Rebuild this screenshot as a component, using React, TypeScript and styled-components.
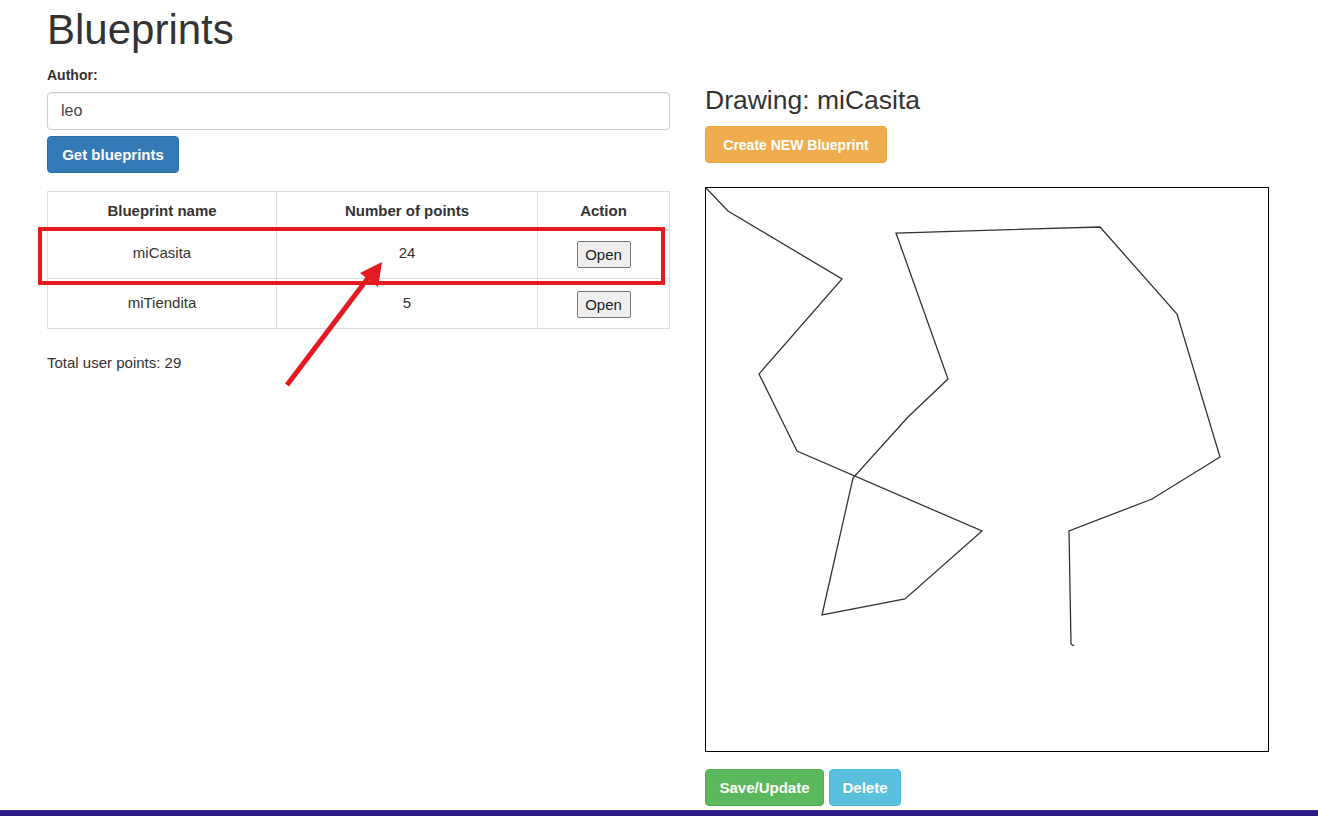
import React from "react";
import styled, { createGlobalStyle } from "styled-components";

const Global = createGlobalStyle`
  html, body { margin: 0; padding: 0; background: #fff; }
  body { font-family: "Liberation Sans", Arial, sans-serif; color: #333; font-size: 15px; }
  * { box-sizing: border-box; }
`;

const Page = styled.div`
  position: relative;
  min-height: 816px;
  display: flex;
  flex-direction: column;
`;

const Columns = styled.div`
  display: grid;
  grid-template-columns: 623px 564px;
  column-gap: 35px;
  padding: 0 0 0 47px;
`;

const LeftCol = styled.div`
  display: flex;
  flex-direction: column;
`;

const RightCol = styled.div`
  display: flex;
  flex-direction: column;
  padding-top: 84px;
`;

const Title = styled.h1`
  margin: 6px 0 0;
  font-size: 42px;
  font-weight: 400;
  line-height: 48px;
  color: #333;
`;

const Label = styled.label`
  margin-top: 11px;
  font-weight: 700;
  font-size: 14px;
  line-height: 20px;
`;

const Input = styled.input`
  margin-top: 7px;
  height: 38px;
  width: 100%;
  border: 1px solid #ccc;
  border-radius: 4px;
  padding: 6px 13px;
  font-family: inherit;
  font-size: 16px;
  color: #444;
  box-shadow: inset 0 1px 1px rgba(0,0,0,0.075);
`;

const Btn = styled.button<{ $bg: string; $border: string; $w: number }>`
  width: ${p => p.$w}px;
  height: 37px;
  padding: 0 6px;
  white-space: nowrap;
  border-radius: 4px;
  border: 1px solid ${p => p.$border};
  background: ${p => p.$bg};
  color: #fff;
  font-family: inherit;
  font-weight: 700;
  font-size: 15px;
  cursor: pointer;
`;

const GetBtn = styled(Btn)`
  margin-top: 6px;
  align-self: flex-start;
`;

const Table = styled.table`
  margin-top: 18px;
  width: 100%;
  border-collapse: collapse;
  border: 1px solid #ddd;
`;

const Th = styled.th<{ $w?: number }>`
  border: 1px solid #ddd;
  border-bottom-width: 2px;
  height: 38px;
  padding: 0 8px;
  font-size: 15px;
  font-weight: 700;
  text-align: center;
  vertical-align: middle;
  ${p => (p.$w ? `width: ${p.$w}px;` : "")}
`;

const Td = styled.td<{ $h: number }>`
  border: 1px solid #ddd;
  height: ${p => p.$h}px;
  text-align: center;
  vertical-align: middle;
  font-size: 15px;
  padding: 0 8px 3px;
`;

const OpenBtn = styled.button`
  height: 27px;
  width: 54px;
  margin-top: 4px;
  font-family: inherit;
  font-size: 15px;
  color: #222;
  background: #efefef;
  border: 1px solid #767676;
  border-radius: 2px;
  padding: 0;
`;

const Total = styled.p`
  margin: 25px 0 0;
  font-size: 15px;
`;

const SubTitle = styled.h3`
  margin: 0;
  font-size: 26.5px;
  font-weight: 400;
  line-height: 32px;
  color: #333;
`;

const CreateBtn = styled(Btn)`
  margin-top: 10px;
  align-self: flex-start;
  font-size: 14px;
`;

const Board = styled.div`
  margin-top: 24px;
  width: 564px;
  height: 565px;
  border: 1px solid #000;
  background: #fff;
`;

const Actions = styled.div`
  margin-top: 17px;
  display: flex;
  gap: 5px;
`;

const BottomBar = styled.div`
  margin-top: auto;
  height: 6px;
  background: #2b1987;
  border-top: 1px solid #3d2d94;
`;

const Overlay = styled.svg`
  position: absolute;
  left: 0;
  top: 0;
  pointer-events: none;
`;

const points: [number, number][] = [
  [0, 0], [22, 23], [136, 91], [53, 186], [91, 263], [276, 343], [199, 411],
  [116, 427], [147, 290], [202, 229], [242, 191], [190, 45], [394, 39],
  [471, 126], [514, 269], [446, 311], [363, 343], [365, 456], [368, 458],
];

const rows = [
  { name: "miCasita", pts: 24, h: 49 },
  { name: "miTiendita", pts: 5, h: 50 },
];

export default function App() {
  return (
    <Page>
      <Global />
      <Columns>
        <LeftCol>
          <Title>Blueprints</Title>
          <Label htmlFor="author">Author:</Label>
          <Input id="author" defaultValue="leo" />
          <GetBtn $bg="#337ab7" $border="#2e6da4" $w={132}>Get blueprints</GetBtn>
          <Table>
            <thead>
              <tr>
                <Th $w={229}>Blueprint name</Th>
                <Th $w={261}>Number of points</Th>
                <Th>Action</Th>
              </tr>
            </thead>
            <tbody>
              {rows.map(r => (
                <tr key={r.name}>
                  <Td $h={r.h}>{r.name}</Td>
                  <Td $h={r.h}>{r.pts}</Td>
                  <Td $h={r.h}><OpenBtn>Open</OpenBtn></Td>
                </tr>
              ))}
            </tbody>
          </Table>
          <Total>Total user points: 29</Total>
        </LeftCol>
        <RightCol>
          <SubTitle>Drawing: miCasita</SubTitle>
          <CreateBtn $bg="#f0ad4e" $border="#eea236" $w={182}>Create NEW Blueprint</CreateBtn>
          <Board>
            <svg width="562" height="563" viewBox="0 0 562 563">
              <polyline
                points={points.map(p => p.join(",")).join(" ")}
                fill="none"
                stroke="#333"
                strokeWidth="1.3"
              />
            </svg>
          </Board>
          <Actions>
            <Btn $bg="#5cb85c" $border="#4cae4c" $w={119}>Save/Update</Btn>
            <Btn $bg="#5bc0de" $border="#46b8da" $w={72}>Delete</Btn>
          </Actions>
        </RightCol>
      </Columns>
      <BottomBar />
      <Overlay width="1318" height="816" viewBox="0 0 1318 816">
        <rect x="40" y="229" width="623" height="54" fill="none" stroke="#e5191f" strokeWidth="4" />
        <line x1="287" y1="385" x2="368" y2="278" stroke="#e5191f" strokeWidth="5" />
        <polygon points="382,262 360,273 378,287" fill="#e5191f" />
      </Overlay>
    </Page>
  );
}
